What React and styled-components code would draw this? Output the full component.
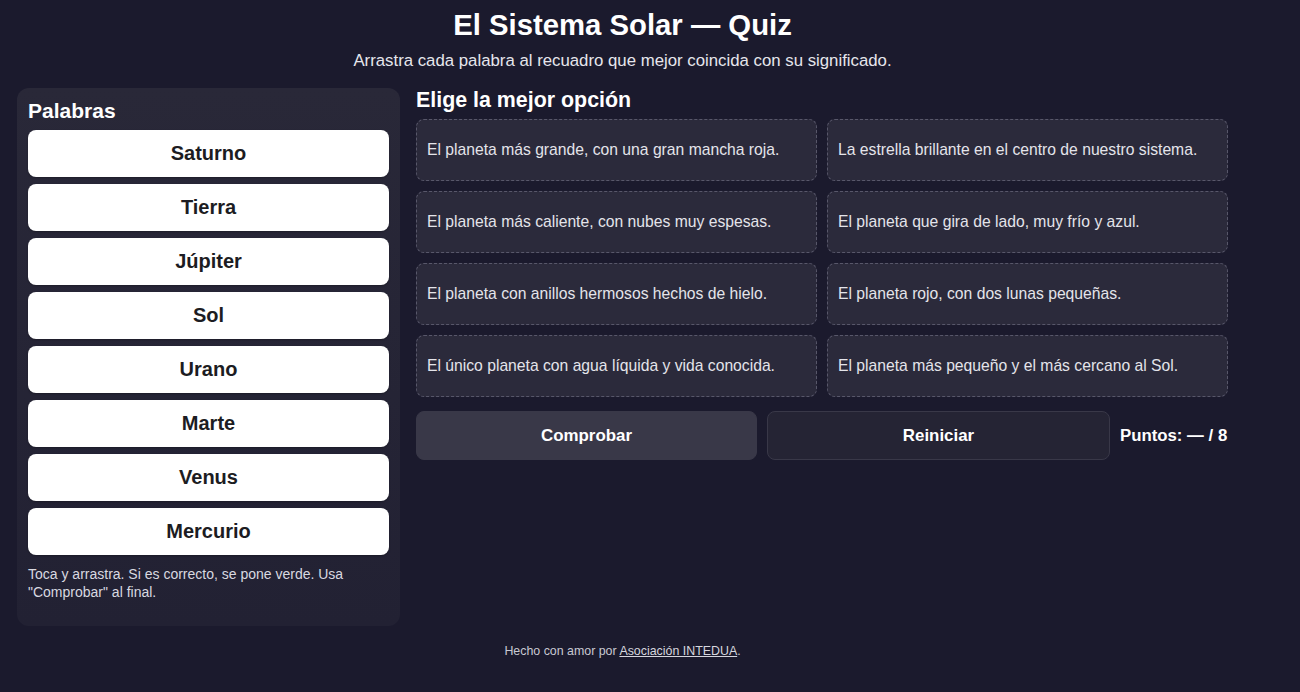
import React from "react";
import styled, { createGlobalStyle } from "styled-components";

const Global = createGlobalStyle`
  html, body { margin: 0; padding: 0; }
  body {
    background: #1b1a2d;
    color: #f2f2f5;
    font-family: "Liberation Sans", Arial, sans-serif;
    min-height: 692px;
  }
`;

const Page = styled.div`
  width: 1211px;
  margin-left: 17px;
  display: flex;
  flex-direction: column;
`;

const Header = styled.header`
  text-align: center;
  padding-top: 8px;
`;

const Title = styled.h1`
  margin: 0;
  font-size: 29.3px;
  line-height: 34px;
  font-weight: 700;
  color: #ffffff;
`;

const Subtitle = styled.p`
  margin: 9px 0 0;
  font-size: 16.8px;
  line-height: 20px;
  color: #e6e6ec;
`;

const Main = styled.main`
  display: grid;
  grid-template-columns: 383px 1fr;
  gap: 16px;
  margin-top: 17px;
  align-items: start;
`;

const Panel = styled.section`
  background: linear-gradient(180deg, #292838 0%, #222133 100%);
  border-radius: 12px;
  padding: 11px 11px 34px;
  height: 538px;
  box-sizing: border-box;
`;

const PanelTitle = styled.h2`
  margin: 0 0 7px;
  font-size: 21px;
  line-height: 24px;
  font-weight: 700;
  color: #ffffff;
`;

const WordList = styled.div`
  display: flex;
  flex-direction: column;
  gap: 7px;
`;

const Word = styled.div`
  height: 47px;
  background: #ffffff;
  border-radius: 8px;
  display: flex;
  align-items: center;
  justify-content: center;
  color: #1c1c22;
  font-size: 20px;
  font-weight: 700;
  box-shadow: 0 1px 2px rgba(0, 0, 0, 0.25);
`;

const Hint = styled.p`
  margin: 10px 0 0;
  font-size: 14px;
  line-height: 18px;
  color: #d9d9e0;
`;

const Right = styled.section`
  display: flex;
  flex-direction: column;
`;

const SectionTitle = styled.h2`
  margin: 0 0 7px;
  font-size: 21.4px;
  line-height: 24px;
  font-weight: 700;
  color: #ffffff;
`;

const Grid = styled.div`
  display: grid;
  grid-template-columns: 401px 401px;
  gap: 10px;
`;

const Zone = styled.div`
  height: 62px;
  box-sizing: border-box;
  border: 1px dashed #58576a;
  border-radius: 8px;
  background: #2b2a3b;
  display: flex;
  align-items: center;
  padding: 0 10px;
  font-size: 15.7px;
  color: #e4e4ea;
`;

const Actions = styled.div`
  display: flex;
  align-items: center;
  gap: 10px;
  margin-top: 14px;
`;

const Button = styled.button`
  height: 49px;
  width: ${(p) => p.$w}px;
  box-sizing: border-box;
  border-radius: 8px;
  border: 1px solid #393848;
  background: ${(p) => (p.$primary ? "#393848" : "#252434")};
  color: #ffffff;
  font-family: "Liberation Sans", Arial, sans-serif;
  font-size: 16.9px;
  font-weight: 700;
  cursor: pointer;
`;

const Score = styled.span`
  font-size: 16.8px;
  font-weight: 700;
  color: #ffffff;
`;

const Footer = styled.footer`
  text-align: center;
  margin-top: 17px;
  font-size: 12.4px;
  line-height: 16px;
  color: #c9c9d2;
`;

const Link = styled.a`
  color: #d6d6de;
  text-decoration: underline;
`;

const words = ["Saturno", "Tierra", "Júpiter", "Sol", "Urano", "Marte", "Venus", "Mercurio"];
const clues = [
  "El planeta más grande, con una gran mancha roja.",
  "La estrella brillante en el centro de nuestro sistema.",
  "El planeta más caliente, con nubes muy espesas.",
  "El planeta que gira de lado, muy frío y azul.",
  "El planeta con anillos hermosos hechos de hielo.",
  "El planeta rojo, con dos lunas pequeñas.",
  "El único planeta con agua líquida y vida conocida.",
  "El planeta más pequeño y el más cercano al Sol.",
];

export default function App() {
  return (
    <>
      <Global />
      <Page>
        <Header>
          <Title>El Sistema Solar — Quiz</Title>
          <Subtitle>Arrastra cada palabra al recuadro que mejor coincida con su significado.</Subtitle>
        </Header>
        <Main>
          <Panel>
            <PanelTitle>Palabras</PanelTitle>
            <WordList>
              {words.map((w) => (
                <Word key={w}>{w}</Word>
              ))}
            </WordList>
            <Hint>Toca y arrastra. Si es correcto, se pone verde. Usa "Comprobar" al final.</Hint>
          </Panel>
          <Right>
            <SectionTitle>Elige la mejor opción</SectionTitle>
            <Grid>
              {clues.map((c) => (
                <Zone key={c}>{c}</Zone>
              ))}
            </Grid>
            <Actions>
              <Button $primary $w={341}>Comprobar</Button>
              <Button $w={343}>Reiniciar</Button>
              <Score>Puntos: — / 8</Score>
            </Actions>
          </Right>
        </Main>
        <Footer>
          Hecho con amor por <Link href="#">Asociación INTEDUA</Link>.
        </Footer>
      </Page>
    </>
  );
}
